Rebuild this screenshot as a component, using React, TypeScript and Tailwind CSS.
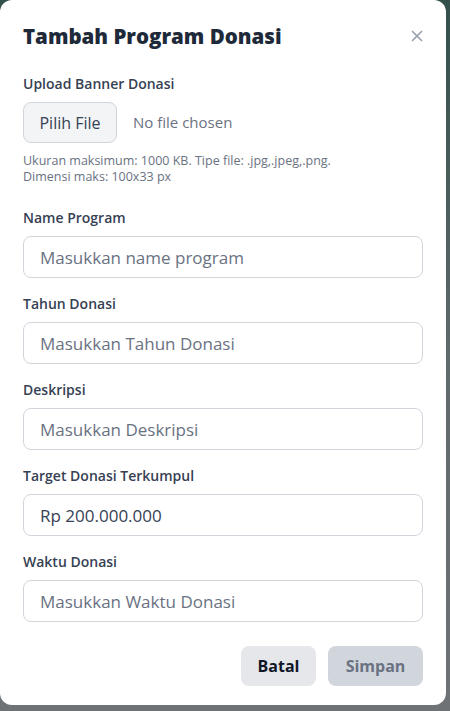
import { X } from "lucide-react";

const fields = [
  { label: "Name Program", placeholder: "Masukkan name program" },
  { label: "Tahun Donasi", placeholder: "Masukkan Tahun Donasi" },
  { label: "Deskripsi", placeholder: "Masukkan Deskripsi" },
  { label: "Target Donasi Terkumpul", placeholder: "", value: "Rp 200.000.000" },
  { label: "Waktu Donasi", placeholder: "Masukkan Waktu Donasi" },
];

export default function App() {
  return (
    <div
      className="h-[711px] w-[450px] overflow-hidden bg-gradient-to-b from-[#33504a] via-[#5f6a6a] to-[#6f7275]"
      style={{ fontFamily: '"Open Sans", "Liberation Sans", sans-serif' }}
    >
      <div className="h-[705px] w-[446px] rounded-xl bg-white px-[23px] pt-[22px]">
        <div className="flex items-center justify-between">
          <h2 className="text-[20.5px] leading-7 font-extrabold text-gray-800">Tambah Program Donasi</h2>
          <button className="mr-[-3px] text-gray-400">
            <X size={18} strokeWidth={2.25} />
          </button>
        </div>

        <div className="mt-6">
          <label className="block text-sm leading-5 font-semibold text-gray-700">Upload Banner Donasi</label>
          <div className="mt-2 flex items-center gap-4">
            <button className="h-[41px] w-[94px] rounded-lg border border-gray-300 bg-gray-100 text-base text-gray-700">
              Pilih File
            </button>
            <span className="text-[15px] text-gray-500">No file chosen</span>
          </div>
          <p className="mt-[10px] text-[12.5px] leading-4 text-gray-500">
            Ukuran maksimum: 1000 KB. Tipe file: .jpg,.jpeg,.png.
            <br />
            Dimensi maks: 100x33 px
          </p>
        </div>

        <div className="mt-[23px] space-y-4">
          {fields.map((f) => (
            <div key={f.label}>
              <label className="block text-sm leading-5 font-semibold text-gray-700">{f.label}</label>
              <input
                className="mt-2 block h-[42px] w-full rounded-lg border border-gray-300 px-4 text-[17px] text-gray-700 placeholder:text-gray-500"
                placeholder={f.placeholder}
                defaultValue={f.value}
              />
            </div>
          ))}
        </div>

        <div className="mt-6 flex justify-end gap-3">
          <button className="h-10 w-[75px] rounded-lg bg-gray-200 text-base font-bold text-gray-900">Batal</button>
          <button className="h-10 w-[95px] rounded-lg bg-gray-300 text-base font-bold text-gray-500">Simpan</button>
        </div>
      </div>
    </div>
  );
}
